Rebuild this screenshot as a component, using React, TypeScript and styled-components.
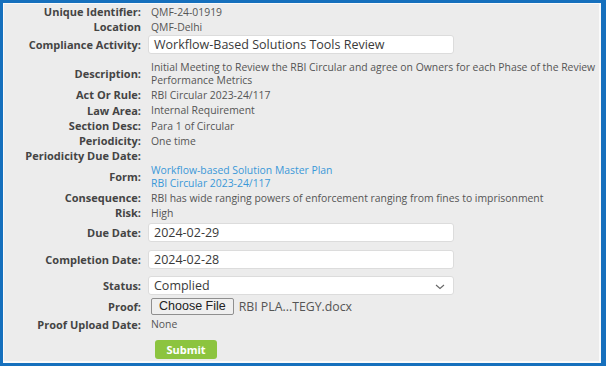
import React from "react";
import styled, { createGlobalStyle } from "styled-components";

const GlobalStyle = createGlobalStyle`
  html, body {
    margin: 0;
    padding: 0;
    background: #1670bd;
  }
  body {
    font-family: "Open Sans", "DejaVu Sans", sans-serif;
  }
`;

interface Field {
  label: string;
  h: number;
  pt?: number;
  kind: "text" | "input" | "links" | "select" | "file" | "multi";
  value?: string;
  lines?: string[];
}

const fields: Field[] = [
  { label: "Unique Identifier:", h: 15, kind: "text", value: "QMF-24-01919" },
  { label: "Location", h: 15, kind: "text", value: "QMF-Delhi" },
  { label: "Compliance Activity:", h: 21, kind: "input", value: "Workflow-Based Solutions Tools Review" },
  {
    label: "Description:",
    h: 32,
    pt: 4,
    kind: "multi",
    lines: [
      "Initial Meeting to Review the RBI Circular and agree on Owners for each Phase of the Review",
      "Performance Metrics",
    ],
  },
  { label: "Act Or Rule:", h: 15, kind: "text", value: "RBI Circular 2023-24/117" },
  { label: "Law Area:", h: 16, kind: "text", value: "Internal Requirement" },
  { label: "Section Desc:", h: 15, kind: "text", value: "Para 1 of Circular" },
  { label: "Periodicity:", h: 15, kind: "text", value: "One time" },
  { label: "Periodicity Due Date:", h: 15, kind: "text", value: "" },
  {
    label: "Form:",
    h: 27,
    kind: "links",
    lines: ["Workflow-based Solution Master Plan", "RBI Circular 2023-24/117"],
  },
  {
    label: "Consequence:",
    h: 15,
    kind: "text",
    value: "RBI has wide ranging powers of enforcement ranging from fines to imprisonment",
  },
  { label: "Risk:", h: 15, kind: "text", value: "High" },
  { label: "Due Date:", h: 24, kind: "input", value: "2024-02-29" },
  { label: "Completion Date:", h: 30, kind: "input", value: "2024-02-28" },
  { label: "Status:", h: 23, kind: "select", value: "Complied" },
  { label: "Proof:", h: 18, kind: "file", value: "RBI PLA...TEGY.docx" },
  { label: "Proof Upload Date:", h: 18, kind: "text", value: "None" },
];

export default function App() {
  return (
    <>
      <GlobalStyle />
      <Frame>
        <Panel>
          {fields.map((f) => (
            <Row key={f.label} h={f.h} pt={f.pt ?? 0}>
              <Label>{f.label}</Label>
              <Value>
                {f.kind === "text" && <Text>{f.value}</Text>}
                {f.kind === "multi" && (
                  <LineList>
                    {f.lines!.map((l) => (
                      <Text key={l}>{l}</Text>
                    ))}
                  </LineList>
                )}
                {f.kind === "input" && <Input>{f.value}</Input>}
                {f.kind === "links" && (
                  <LineList>
                    {f.lines!.map((l) => (
                      <Link key={l}>{l}</Link>
                    ))}
                  </LineList>
                )}
                {f.kind === "select" && (
                  <Input>
                    {f.value}
                    <Chevron width="10" height="6" viewBox="0 0 10 6">
                      <path d="M1 1 L5 4.5 L9 1" fill="none" stroke="#666" strokeWidth="1.1" />
                    </Chevron>
                  </Input>
                )}
                {f.kind === "file" && (
                  <FileRow>
                    <FileButton>Choose File</FileButton>
                    <FileName>{f.value}</FileName>
                  </FileRow>
                )}
              </Value>
            </Row>
          ))}
          <Actions>
            <SubmitButton>Submit</SubmitButton>
          </Actions>
        </Panel>
      </Frame>
    </>
  );
}

const Frame = styled.div`
  width: 606px;
  height: 366px;
  box-sizing: border-box;
  padding: 3px 5px 3px 3px;
  background: #1670bd;
`;

const Panel = styled.div`
  height: 100%;
  box-sizing: border-box;
  background: #ececec;
  border-top: 1px solid #fafafa;
  border-left: 1px solid #fafafa;
  border-right: 2px solid #fafafa;
  border-bottom: 2px solid #fafafa;
  display: flex;
  flex-direction: column;
  overflow: hidden;
`;

const Row = styled.div<{ h: number; pt: number }>`
  display: flex;
  align-items: center;
  height: ${(p) => p.h}px;
  padding-top: ${(p) => p.pt}px;
  box-sizing: border-box;
  flex-shrink: 0;
`;

const Label = styled.div`
  width: 137px;
  text-align: right;
  font-size: 11px;
  font-weight: 700;
  color: #444;
  white-space: nowrap;
  flex-shrink: 0;
`;

const Value = styled.div`
  flex: 1;
  padding-left: 10px;
  display: flex;
  align-items: center;
  min-width: 0;
`;

const Text = styled.span`
  font-size: 10.4px;
  color: #555;
  line-height: 12px;
  white-space: nowrap;
`;

const LineList = styled.div`
  display: flex;
  flex-direction: column;
  gap: 1px;
`;

const Input = styled.div`
  position: relative;
  margin-left: -3px;
  width: 306px;
  height: 19px;
  box-sizing: border-box;
  background: #fff;
  border: 1px solid #dcdcdc;
  border-radius: 3px;
  padding: 0 5px;
  display: flex;
  align-items: center;
  font-size: 12.5px;
  color: #3a3a3a;
`;

const Chevron = styled.svg`
  position: absolute;
  right: 8px;
  top: 7px;
`;

const Link = styled.a`
  font-size: 10.4px;
  color: #3a98d8;
  line-height: 12px;
  cursor: pointer;
`;

const FileRow = styled.div`
  display: flex;
  align-items: center;
  gap: 5px;
`;

const FileButton = styled.div`
  height: 17px;
  box-sizing: border-box;
  padding: 0 7px;
  border: 1px solid #8f8f8f;
  border-radius: 2px;
  background: #efefef;
  font-family: "Liberation Sans", Arial, sans-serif;
  font-size: 12.5px;
  color: #222;
  display: flex;
  align-items: center;
`;

const FileName = styled.span`
  font-size: 12.3px;
  color: #555;
`;

const Actions = styled.div`
  display: flex;
  padding: 7px 0 0 151px;
`;

const SubmitButton = styled.button`
  width: 62px;
  height: 19px;
  padding: 0;
  border: none;
  border-radius: 3px;
  background: #8cc43f;
  color: #fff;
  font-family: "Open Sans", sans-serif;
  font-weight: 700;
  font-size: 11px;
  cursor: pointer;
`;
